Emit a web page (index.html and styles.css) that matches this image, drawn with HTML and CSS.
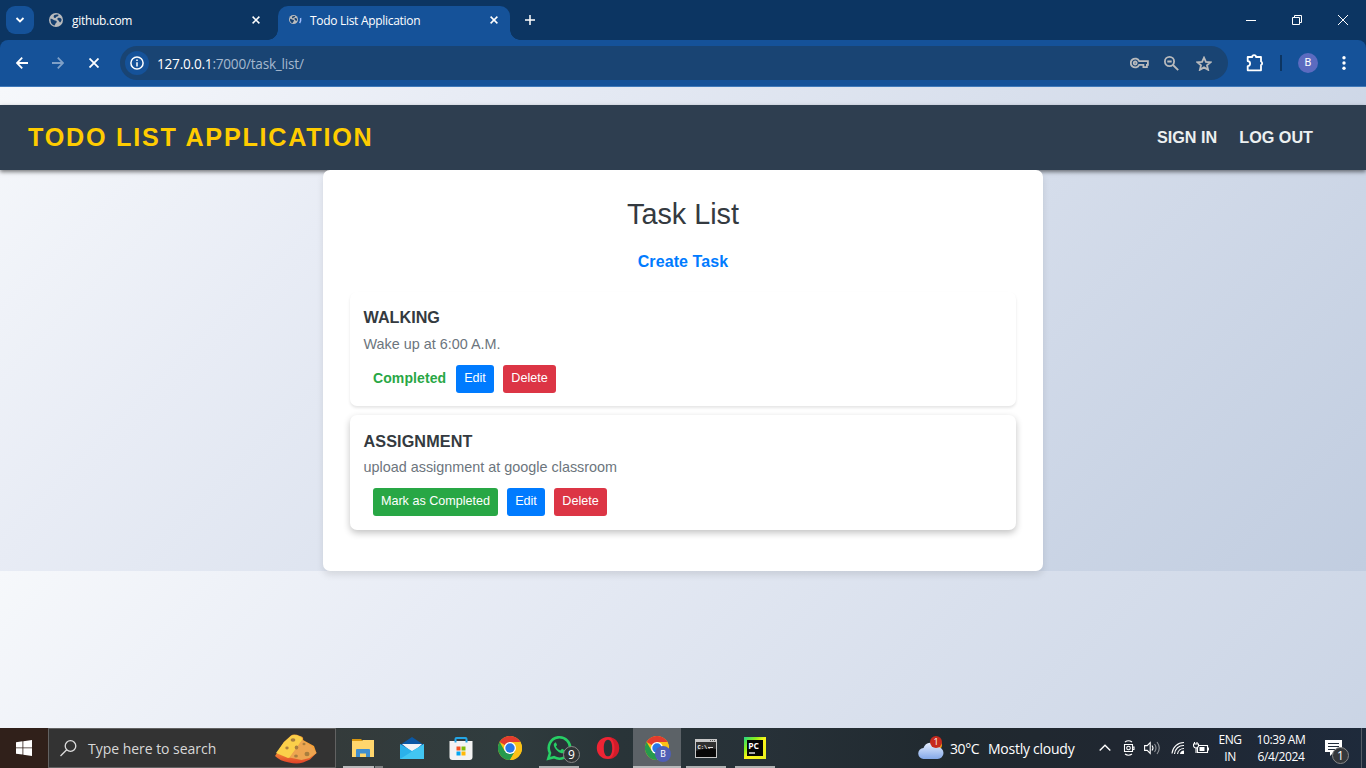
FILE: index.html
```html
<!DOCTYPE html>
<html lang="en">
<head>
<meta charset="utf-8">
<title>Todo List Application</title>
<link rel="stylesheet" href="styles.css">
</head>
<body>
<svg class="defs" width="0" height="0">
  <defs>
    <symbol id="globe" viewBox="0 0 14 14"><circle cx="7" cy="7" r="7" fill="#b9bbbd"/><path d="M1.500 5.800C3.500 5.400 4 7.300 6 7.400 8 7.500 8.400 8.800 7 10c-.8.700-.7 1.700-1.400 2.500C3 12.300 1.300 9.500 1.500 5.800zM5 2.300c1.300-.9 3.200-1 4.500-.5C9.800 3.100 8.600 3.500 7.500 3.700 6.700 4 7 5 6 5.100 4.900 5.200 4.200 3.600 5 2.300zM8.500 5.300c1.500-.8 2.800-.5 4 .8.300 1.500-.4 2.800-1.300 3.400C10 9 10.300 7.800 9.500 7.400 8.500 7 8.200 6.200 8.500 5.300z" fill="#17406f"/></symbol>
    <symbol id="chrome" viewBox="0 0 24 24"><circle cx="12" cy="12" r="12" fill="#fbc116"/><path d="M12 12 1.600 6A12 12 0 0 1 22.400 6H12z" fill="#e33b2e"/><path d="M1.600 6A12 12 0 0 0 12 24l5.200-9L12 12 6.800 15z" fill="#269a4c"/><path d="M12 6h10.400A12 12 0 0 1 12 24l5.200-9z" fill="#fbc116"/><circle cx="12" cy="12" r="6" fill="#fff"/><circle cx="12" cy="12" r="4.700" fill="#2877e8"/></symbol>
  </defs>
</svg>
<div class="screen">
  <header class="browser">
    <div class="tabstrip">
      <div class="tab-search"><svg width="10" height="8" viewBox="0 0 10 8"><path d="M1.500 2 5 5.500 8.500 2" class="stroke2"/></svg></div>
      <div class="tab">
        <svg class="favicon" width="14" height="14"><use href="#globe"/></svg>
        <span class="tab-title t-github">github.com</span>
        <svg class="x" width="8" height="8" viewBox="0 0 8 8"><path d="M.6.6l6.800 6.800M7.400.6.600 7.400" class="stroke15"/></svg>
      </div>
      <div class="tab tab-active">
        <svg class="favicon" width="13" height="10" viewBox="0 0 13 10"><use href="#globe" width="9" height="9"/><path d="M11.600 3c.3 1.700 0 3.500-1 5" stroke="#9ebcff" stroke-width="1.500" fill="none"/></svg>
        <span class="tab-title t-todo">Todo List Application</span>
        <svg class="x" width="8" height="8" viewBox="0 0 8 8"><path d="M.6.6l6.800 6.800M7.400.6.600 7.400" class="stroke15"/></svg>
        <i class="flare flare-l"></i><i class="flare flare-r"></i>
      </div>
      <svg class="newtab" width="10" height="10" viewBox="0 0 10 10"><path d="M5 0v10M0 5h10" class="stroke15"/></svg>
      <div class="winbtns">
        <svg width="10" height="10" viewBox="0 0 10 10"><path d="M0 5.500h10" class="stroke1"/></svg>
        <svg width="10" height="10" viewBox="0 0 10 10"><path d="M.5 2.500h7v7h-7zM2.500 2.500v-2h7v7h-2" class="stroke1"/></svg>
        <svg width="10" height="10" viewBox="0 0 10 10"><path d="M0 0l10 10M10 0 0 10" class="stroke1"/></svg>
      </div>
    </div>
    <div class="toolbar">
      <div class="navbtns">
        <svg width="12" height="12" viewBox="0 0 12 12"><path d="M12 6H1.200M6.200.7.900 6l5.300 5.300" class="stroke2"/></svg>
        <svg class="dim" width="12" height="12" viewBox="0 0 12 12"><path d="M0 6h10.800M5.800.7 11.100 6l-5.300 5.300" class="stroke2"/></svg>
        <svg width="10" height="10" viewBox="0 0 10 10"><path d="M.5.5l9 9M9.500.5l-9 9" class="stroke2"/></svg>
      </div>
      <div class="omnibox">
        <div class="info"><svg width="14" height="14" viewBox="0 0 14 14"><circle cx="7" cy="7" r="6.100" class="stroke15"/><path d="M7 6.200v4.200M7 3.500v1.500" class="stroke15"/></svg></div>
        <span class="url"><b>127.0.0.1</b>:7000/task_list/</span>
        <div class="omni-icons">
          <svg width="19" height="12" viewBox="0 0 19 12"><path d="M9.200 4.200h8.700v3.600h-1v2.400h-3.500V7.800H9.200A4.400 4.400 0 1 1 9.200 4.200z" class="grey"/><circle cx="5.200" cy="6" r="1.500" class="grey"/></svg>
          <svg width="15" height="15" viewBox="0 0 15 15"><circle cx="5.500" cy="5.500" r="4.600" class="grey"/><path d="M9 9l5.200 5.200M3.300 5.500h4.400" class="grey"/></svg>
          <svg width="16" height="15" viewBox="0 0 16 15"><path d="M8 1.700l1.900 4.200 4.600.4-3.500 3 1.100 4.500L8 11.400l-4.100 2.400L5 9.300l-3.500-3 4.600-.4z" class="grey"/></svg>
        </div>
      </div>
      <svg class="puzzle" width="18" height="18" viewBox="0 0 18 18"><path d="M1.700 3h4.500a1.900 1.800 0 0 1 3.800 0h5v4.500a1.700 1.900 0 0 1 0 3.600v5.200H1.700v-4.200a2.400 2.500 0 0 0 0-5z" class="stroke2" stroke-linejoin="round"/></svg>
      <i class="divider"></i>
      <div class="avatar">B</div>
      <svg class="dots" width="4" height="14" viewBox="0 0 4 14"><circle cx="2" cy="1.800" r="1.700"/><circle cx="2" cy="7" r="1.700"/><circle cx="2" cy="12.200" r="1.700"/></svg>
    </div>
  </header>

  <main class="page">
    <nav class="navbar">
      <div class="brand">TODO LIST APPLICATION</div>
      <div class="links"><a>SIGN IN</a><a class="logout">LOG OUT</a></div>
    </nav>
    <section class="container">
      <h1>Task List</h1>
      <a class="create">Create Task</a>
      <article class="task done">
        <h2 class="walking">WALKING</h2>
        <p class="wake">Wake up at 6:00 A.M.</p>
        <div class="actions"><span class="completed">Completed</span><span class="btn edit">Edit</span><span class="btn delete">Delete</span></div>
      </article>
      <article class="task">
        <h2 class="assignment">ASSIGNMENT</h2>
        <p class="upload">upload assignment at google classroom</p>
        <div class="actions"><span class="btn mark">Mark as Completed</span><span class="btn edit">Edit</span><span class="btn delete">Delete</span></div>
      </article>
    </section>
  </main>

  <footer class="taskbar">
    <div class="start"><svg width="16" height="16" viewBox="0 0 16 16"><path d="M0 2.300 6.500 1.300v6.200H0zM7.300 1.200 16 0v7.500H7.300zM0 8.300h6.500v6.300L0 13.700zM7.300 8.300H16V16l-8.700-1.200z" fill="#fff"/></svg></div>
    <div class="search">
      <svg width="17" height="17" viewBox="0 0 17 17"><circle cx="10.500" cy="6" r="5.300" fill="none" stroke="#ddd" stroke-width="1.300"/><path d="M6.700 9.800.500 16" stroke="#ddd" stroke-width="1.300"/></svg>
      <span class="search-text">Type here to search</span>
      <svg class="cheese" width="42" height="30" viewBox="0 0 42 30"><defs><linearGradient id="rind" x2="0" y2="1"><stop offset=".5" stop-color="#f7a035"/><stop offset="1" stop-color="#e0402a"/></linearGradient></defs><path d="M0 22 9 8 16 1.500Q19-.5 25 2q4 1 3 4l11 6 2.500 7L35 25.500 28 28.500q-6 2-14 0Q5 27 0 22z" fill="url(#rind)"/><path d="M1 19 9 8l7-6q3-2 9 .500 3 1.500 2 4L15 23.500 13 24z" fill="#fbd04a"/><path d="M27 6q5 3 9.500 6l5 7-7 5-8 2-12-2.500z" fill="#eda550"/><g fill="#a97e3e"><ellipse cx="18" cy="6" rx="2.400" ry="1.700"/><ellipse cx="12" cy="14" rx="1.700" ry="1.400"/><ellipse cx="21.500" cy="13.500" rx="1.800" ry="2"/><ellipse cx="29" cy="10" rx="1.500" ry="1.200"/><ellipse cx="32" cy="20" rx="2.500" ry="2.200"/><ellipse cx="21" cy="22" rx="1.900" ry="1.600"/></g></svg>
    </div>
    <div class="apps">
      <div class="app open stacked"><svg width="22" height="18" viewBox="0 0 22 18"><path d="M0 0h9l2 2H0z" fill="#d99710"/><path d="M0 2h10l1-1h11v17H0z" fill="#ffd66d"/><path d="M4 11q0-1 1-1h12q1 0 1 1v7h-4v-3.500H8V18H4z" fill="#3f8ed0"/></svg></div>
      <div class="app"><svg width="24" height="22" viewBox="0 0 24 22"><path d="M0 8 12 0l12 8v14H0z" fill="#0b58a4"/><path d="M2 7h20l-9 9z" fill="#f2f5f7"/><path d="M0 7l12 7 12-7v15H0z" fill="#2bb1ea"/><path d="M0 22 24 7v15z" fill="#42c6f2"/></svg></div>
      <div class="app"><svg width="24" height="23" viewBox="0 0 24 23"><path d="M.5 4h23v16q0 3-3 3h-17q-3 0-3-3z" fill="#f3f3f3"/><path d="M6.500 5.500V2q0-1 1-1h9q1 0 1 1v3.500" fill="none" stroke="#24a6e6" stroke-width="2"/><path d="M7.500 9.500h4v4h-4z" fill="#f35325"/><path d="M12.500 9.500h4v4h-4z" fill="#81bc06"/><path d="M7.500 14.500h4v4h-4z" fill="#05a6f0"/><path d="M12.500 14.500h4v4h-4z" fill="#ffba08"/></svg></div>
      <div class="app"><svg width="24" height="24"><use href="#chrome"/></svg></div>
      <div class="app open"><svg width="26" height="26" viewBox="0 0 26 26"><path d="M2.300 23.700 4 18A10.700 10.700 0 1 1 8 22.200z" fill="#293438" stroke="#27ce65" stroke-width="2.600"/><path d="M9.200 7.500c-1.800 1-1.800 2.800-.7 4.700 1.500 2.800 3.600 4.800 6.500 5.900 1.500.6 3.100.2 3.900-1.600l.1-1.200-3-1.500-1.700 1.700c-2-.8-3.300-2.100-4.400-4l1.200-1.600-1.200-2.400z" fill="#27ce65"/></svg><span class="badge wa">9</span></div>
      <div class="app"><svg width="24" height="24" viewBox="0 0 24 24"><path fill-rule="evenodd" d="M12 1c7 0 11.200 5 11.200 11S19 23 12 23 .8 18 .8 12 5 1 12 1zm0 2.700c-3 0-4.200 3.700-4.200 8.300s1.200 8.300 4.200 8.300 4.200-3.700 4.200-8.300S15 3.700 12 3.700z" fill="#ee2434"/><path d="M14 1.200c6 1 9.200 5.600 9.200 10.800S20 22 14 22.800c3-2 4.500-6 4.500-10.800S17 3.500 14 1.200z" fill="#a8121c" opacity=".4"/></svg></div>
      <div class="app open current"><svg width="24" height="24"><use href="#chrome"/></svg><span class="badge profile">B</span></div>
      <div class="app open narrow"><svg width="22" height="19" viewBox="0 0 22 19"><path d="M0 0h22v19H0z" fill="#c8c8c8"/><path d="M1 3h20v15H1z" fill="#080808"/><path d="M1 3h20v7Q12 8 1 12z" fill="#303030"/><path d="M13 8.500h5" stroke="#ddd"/><path d="M15 1.500h1M17 1.500h1M19 1.500h1" stroke="#555"/><text x="2.500" y="9.500" class="cmd">C:\.</text></svg></div>
      <div class="app open narrow"><svg width="22" height="22" viewBox="0 0 22 22"><defs><linearGradient id="pc" x2="1" y2="1"><stop stop-color="#21d789"/><stop offset=".3" stop-color="#8cf01b"/><stop offset=".5" stop-color="#fcf51a"/><stop offset="1" stop-color="#e9ee20"/></linearGradient></defs><path d="M0 0h22v22H0z" fill="url(#pc)"/><path d="M3 3h16v16H3z" fill="#050505"/><path d="M5 16h6" stroke="#fff" stroke-width="1.300"/><text x="4.200" y="11.500" class="pc">PC</text></svg></div>
    </div>
    <div class="weather">
      <div class="cloud"><svg width="26" height="22" viewBox="0 0 26 22"><defs><linearGradient id="cl" x2="0" y2="1"><stop stop-color="#e6efff"/><stop offset="1" stop-color="#83a8e8"/></linearGradient></defs><circle cx="18" cy="8" r="6" fill="#f39b19"/><path d="M6 22a5.500 5.500 0 0 1-.5-11 7.500 7.500 0 0 1 14-1A6 6 0 0 1 19.500 22z" fill="url(#cl)"/></svg><span class="alert">1</span></div>
      <span class="temp">30°C</span><span class="sky">Mostly cloudy</span>
    </div>
    <div class="tray">
      <svg width="12" height="8" viewBox="0 0 12 8"><path d="M.7 6.500 6 1.200l5.300 5.300" class="tr thick"/></svg>
      <svg width="12" height="16" viewBox="0 0 12 16"><path d="M2 2q3.500-2.500 7 0M2 14q3.500 2.500 7 0M1.500 4.500h8v7h-8zM9.500 7h1.500v2.500h-1.500" class="tr"/><circle cx="5.500" cy="8" r="1.800" class="tr"/></svg>
      <svg width="17" height="14" viewBox="0 0 17 14"><path d="M.6 4.600h2.600l3-3v10.800l-3-3H.6z" class="tr"/><path d="M8 4.500q2 2.500 0 5" class="tr"/><path d="M10.500 3q3 4 0 8M13 1q4.500 6 0 12" class="tr faint"/></svg>
      <svg width="14" height="14" viewBox="0 0 14 14"><path d="M1 12.500A12 12 0 0 1 13 1.500M3.500 13A9 9 0 0 1 13 4.500M6.500 13A6.500 6.500 0 0 1 13 7.500" class="tr"/><path d="M9 13a4 4 0 0 1 4-3.500V13z" fill="#fff"/></svg>
      <svg width="16" height="12" viewBox="0 0 16 12"><path d="M5 3.500h9.500v7H4.500V6M15.500 5.500v3M1.500 0v2M4 0v2M.5 2h5v2Q5 6 3 6T.5 4zM3 6v5" class="tr"/><path d="M6.500 5h5v4h-5z" fill="#fff"/></svg>
    </div>
    <div class="lang"><span class="eng">ENG</span><span class="in">IN</span></div>
    <div class="clock"><span class="time">10:39 AM</span><span class="date">6/4/2024</span></div>
    <div class="notif"><svg width="17" height="16" viewBox="0 0 17 16"><path d="M0 0h17v12H9l-4 4v-4H0z" fill="#fff"/><path d="M3 3.500h11M3 6.500h11M3 9.500h7" stroke="#222d3b"/></svg><span class="badge count">1</span></div>
    <i class="showdesk"></i>
  </footer>
</div>
</body>
</html>
```

FILE: styles.css
```css
* { box-sizing: border-box; }
body { margin: 0; overflow: hidden; font-family: "Liberation Sans", Arial, sans-serif; }
svg { display: block; flex: none; }
span, a, h1, h2, p { white-space: nowrap; }
.defs { position: absolute; }
.screen { width: 1366px; height: 768px; display: flex; flex-direction: column; }

/* Browser window */
.browser { height: 87px; background: #0c3562; font-family: "Open Sans", "Noto Sans", sans-serif; color: #fff; }
.stroke1, .stroke15, .stroke2 { fill: none; stroke: #fff; stroke-width: 1; }
.stroke15 { stroke-width: 1.5; }
.stroke2 { stroke-width: 1.8; }
.tabstrip { height: 40px; display: flex; align-items: center; padding-left: 6px; }
.tab-search { width: 28px; height: 28px; border-radius: 9px; background: #155299; display: grid; place-items: center; }
.tab { width: 244px; height: 34px; display: flex; align-items: center; padding: 0 18px 0 15px; }
.tab-title { font-size: 12px; line-height: 16px; padding-top: 2px; }
.favicon { margin-right: 9px; }
.tab .x { margin-left: auto; }
.tab-active { position: relative; align-self: flex-end; width: 232px; padding: 0 12px 6px 11px; background: #155299; border-radius: 10px 10px 0 0; }
.tab-active .favicon { margin-right: 8px; }
.t-github { letter-spacing: -.3px; }
.t-todo { letter-spacing: -.3px; }
.flare { position: absolute; bottom: 0; width: 10px; height: 10px; }
.flare-l { left: -10px; background: radial-gradient(circle at 0 0, transparent 9.5px, #155299 10px); }
.flare-r { right: -10px; background: radial-gradient(circle at 100% 0, transparent 9.5px, #155299 10px); }
.newtab { margin-left: 15px; }
.winbtns { margin: 0 18px 0 auto; display: flex; gap: 36px; }
.toolbar { height: 47px; display: flex; align-items: center; background: #155299; border-bottom: 1px solid #4079b9; border-radius: 8px 8px 0 0; }
.navbtns { width: 120px; padding-left: 16px; display: flex; align-items: center; gap: 24px; }
.navbtns svg:last-child { margin-left: 1px; }
.dim { opacity: .45; }
.omnibox { width: 1108px; height: 34px; border-radius: 17px; background: #194473; display: flex; align-items: center; padding-left: 5px; }
.info { width: 24px; height: 24px; border-radius: 50%; background: #155299; display: grid; place-items: center; }
.url { margin-left: 8px; font-size: 13.6px; color: #a5b8ce; letter-spacing: -.22px; }
.url b { font-weight: 400; color: #fff; }
.omni-icons { margin: 0 16px 0 auto; display: flex; align-items: center; gap: 15px; }
.omni-icons svg:last-child { margin-left: 2px; }
.grey { fill: none; stroke: #b9bbbd; stroke-width: 1.8; }
.puzzle { margin-left: 18px; }
.divider { width: 2px; height: 16px; background: #0c3562; margin-left: 16px; }
.avatar { width: 20px; height: 20px; border-radius: 50%; background: #5c6bc0; margin-left: 16px; font: 11px/20px Roboto, sans-serif; text-align: center; }
.dots { margin-left: 24px; fill: #fff; }

/* Web page */
.page { height: 641px; flex: none; padding-top: 18px; background: linear-gradient(135deg, #f6f8fb 0%, #e8ecf5 25%, #c1cde0 100%) 0 0 / 1366px 484px; }
.navbar { height: 65px; background: #2e3e50; display: flex; justify-content: space-between; align-items: center; padding: 0 53px 0 28px; box-shadow: 0 2px 4px rgba(0, 0, 0, .5); }
.brand { font-size: 25.2px; font-weight: 700; letter-spacing: 1.75px; color: #fc0; }
.links { display: flex; gap: 22px; color: #ecf0f1; font-size: 16.2px; font-weight: 700; }
.container { position: relative; width: 720px; height: 401px; margin: 0 auto; padding: 26px 27px 0; background: #fff; border-radius: 7px; box-shadow: 0 4px 7px rgba(0, 0, 0, .1); clip-path: inset(0 -12px -14px); }
h1 { margin: 0; height: 36px; font-size: 28.8px; line-height: 36px; font-weight: 400; color: #343a40; text-align: center; }
.create { display: block; margin-top: 20px; text-align: center; font-size: 16px; line-height: 20px; font-weight: 700; color: #007bff; letter-spacing: .1px; }
.task { margin-top: 20px; height: 114px; padding: 15px 13.5px 0; border-radius: 7px; background: #fff; box-shadow: 0 2px 3px rgba(0, 0, 0, .1); }
.task + .task { margin-top: 9px; height: 115px; box-shadow: 0 3px 7px rgba(0, 0, 0, .24); }
h2 { margin: 0; font-size: 16.2px; line-height: 21px; font-weight: 700; color: #343a40; }
.task p { margin: 7px 0 0; font-size: 14.4px; line-height: 18px; color: #6c757d; }
.actions { margin: 12px 0 0 9.5px; display: flex; gap: 9px; align-items: center; font-size: 12.6px; height: 28px; }
.task + .task h2 { margin-top: 1px; }
.task + .task p { margin-top: 6px; }
.completed { width: 74px; height: 28px; line-height: 27px; font-size: 14px; font-weight: 700; color: #28a745; letter-spacing: .1px; }
.btn { height: 28px; border-radius: 3px; color: #fff; line-height: 26px; text-align: center; }
.task + .task .btn { line-height: 27px; }
.edit { width: 38px; background: #007bff; }
.delete { width: 53px; background: #dc3545; }
.mark { width: 125px; background: #28a745; }
.assignment { letter-spacing: .1px; }

/* Taskbar */
.taskbar { height: 40px; display: flex; align-items: center; color: #fff; font-family: "Open Sans", "Noto Sans", sans-serif; background: linear-gradient(90deg, #30201a 0, #30201a 48px, #343b3b 330px, #303c3e 500px, #293438 620px, #273138 760px, #20292f 950px, #202731 1120px, #1e2a3b 1366px); }
.start { width: 48px; height: 40px; display: grid; place-items: center; }
.search { width: 288px; height: 40px; border: 1px solid #626262; background: #333; display: flex; align-items: center; padding-left: 11px; }
.search-text { margin-left: 11px; font-size: 14px; color: #d8d8d8; letter-spacing: -.03px; }
.cheese { margin: 1px 18px 0 auto; }
.apps { display: flex; margin-left: 3px; }
.app { position: relative; width: 49px; height: 40px; padding-right: 2px; display: grid; place-items: center; }
.open::after { content: ""; position: absolute; left: 4px; right: 5px; bottom: 0; height: 2px; background: #aeb1b2; }
.stacked::after { background: linear-gradient(90deg, #b8babb 31px, #303a3c 31px, #303a3c 32px, #7d8182 32px); }
.current { background: #5c6267; width: 48px; padding: 0; }
.current::after { left: 0; right: 0; background: #b8babb; }
.narrow { padding-right: 0; }
.narrow::after { left: 5px; right: 4px; }
.badge { position: absolute; display: grid; place-items: center; width: 16px; height: 16px; border-radius: 50%; font-size: 12px; line-height: 16px; }
.wa { right: 4px; top: 18px; background: #303436; border: 1px solid #888; width: 17px; height: 17px; }
.profile { right: 10px; top: 18px; background: #4f5fb6; font: 9px/16px Roboto, sans-serif; }
.cmd { font: 700 5.5px "Liberation Mono", monospace; fill: #fff; }
.pc { font: 700 8.5px "Open Sans", sans-serif; fill: #fff; }
.weather { display: flex; align-items: center; margin-left: 139px; font-size: 14px; }
.cloud { position: relative; width: 26px; margin-right: 6px; }
.alert { position: absolute; left: 12px; top: -1px; width: 12px; height: 12px; border-radius: 50%; background: #c72a1e; font-size: 9px; line-height: 12px; text-align: center; }
.temp { width: 38px; letter-spacing: -.4px; }
.sky { width: 87px; letter-spacing: -.25px; }
.tray { display: flex; align-items: center; margin-left: 24px; gap: 11px; }
.tray svg:nth-child(2) { margin-left: 1px; }
.tray svg:nth-child(3) { margin-left: -2px; }
.tray svg:nth-child(4) { margin-left: -1px; }
.tray svg:nth-child(5) { margin-left: -3px; }
.tr { fill: none; stroke: #fff; stroke-width: 1.1; }
.thick { stroke-width: 1.4; }
.faint { opacity: .5; }
.lang, .clock { display: flex; flex-direction: column; align-items: center; font-size: 12px; line-height: 17px; }
.lang { width: 24px; margin-left: 9px; letter-spacing: -.4px; }
.clock { width: 50px; margin-left: 14px; letter-spacing: -.4px; }
.notif { position: relative; margin-left: 19px; }
.count { left: 7px; top: 7px; width: 17px; height: 17px; background: #35383c; border: 1px solid #888; }
.showdesk { width: 1px; height: 40px; margin-left: auto; margin-right: 4px; background: #555c66; }
```
